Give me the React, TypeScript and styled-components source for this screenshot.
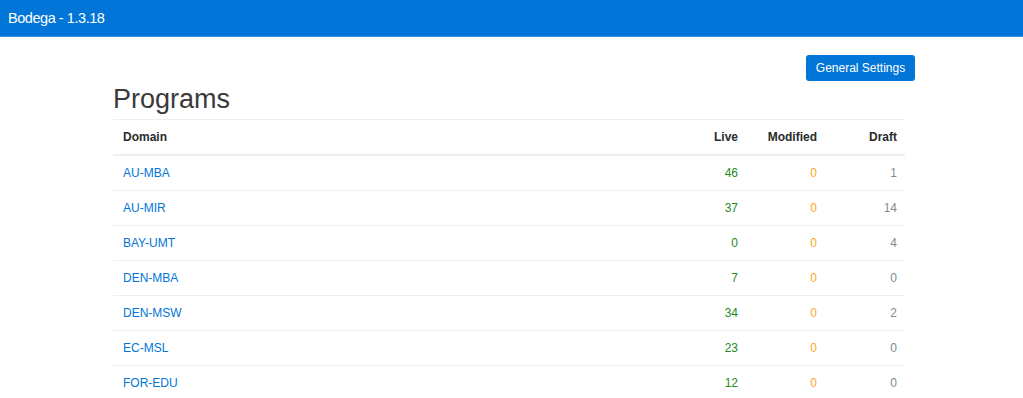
import styled, { createGlobalStyle } from "styled-components";

interface Program {
  domain: string;
  live: number;
  modified: number;
  draft: number;
}

const programs: Program[] = [
  { domain: "AU-MBA", live: 46, modified: 0, draft: 1 },
  { domain: "AU-MIR", live: 37, modified: 0, draft: 14 },
  { domain: "BAY-UMT", live: 0, modified: 0, draft: 4 },
  { domain: "DEN-MBA", live: 7, modified: 0, draft: 0 },
  { domain: "DEN-MSW", live: 34, modified: 0, draft: 2 },
  { domain: "EC-MSL", live: 23, modified: 0, draft: 0 },
  { domain: "FOR-EDU", live: 12, modified: 0, draft: 0 },
];

const App: React.FC = () => {
  return (
    <>
      <GlobalStyle />
      <NavBar>
        <Brand>Bodega - 1.3.18</Brand>
      </NavBar>
      <Container>
        <Actions>
          <PrimaryButton type="button">General Settings</PrimaryButton>
        </Actions>
        <Title>Programs</Title>
        <Table>
          <colgroup>
            <col />
            <col style={{ width: 79 }} />
            <col style={{ width: 79 }} />
            <col style={{ width: 78 }} />
          </colgroup>
          <thead>
            <tr>
              <Th>Domain</Th>
              <Th $right>Live</Th>
              <Th $right>Modified</Th>
              <Th $right>Draft</Th>
            </tr>
          </thead>
          <tbody>
            {programs.map((p) => (
              <tr key={p.domain}>
                <Td>
                  <DomainLink href="#">{p.domain}</DomainLink>
                </Td>
                <Td $right $tone="live">{p.live}</Td>
                <Td $right $tone="modified">{p.modified}</Td>
                <Td $right $tone="draft">{p.draft}</Td>
              </tr>
            ))}
          </tbody>
        </Table>
      </Container>
    </>
  );
};

const GlobalStyle = createGlobalStyle`
  body {
    margin: 0;
    background: #fff;
    font-family: "Liberation Sans", Arial, sans-serif;
    color: #373a3c;
  }
`;

const NavBar = styled.header`
  height: 36px;
  background: #0275d8;
  border-bottom: 1px solid #3b92e0;
  display: flex;
  align-items: center;
  padding: 0 8px;
`;

const Brand = styled.span`
  color: #fff;
  font-size: 14.5px;
  letter-spacing: -0.45px;
`;

const Container = styled.main`
  width: 812px;
  margin: 0 auto;
  padding-right: 5px;
`;

const Actions = styled.div`
  display: flex;
  justify-content: flex-end;
  margin-top: 18px;
`;

const PrimaryButton = styled.button`
  height: 26px;
  width: 109px;
  padding: 0;
  border: none;
  border-radius: 3px;
  background: #0275d8;
  color: #fff;
  font-family: inherit;
  font-size: 12px;
  cursor: pointer;
`;

const Title = styled.h1`
  margin: 2px 0 4px 10px;
  font-size: 27px;
  font-weight: 400;
  line-height: 32px;
  color: #3a3a3a;
`;

const Table = styled.table`
  width: 792px;
  margin-left: 10px;
  border-collapse: collapse;
  table-layout: fixed;
  font-size: 12px;
`;

const Th = styled.th<{ $right?: boolean }>`
  padding: 10px;
  line-height: 14px;
  text-align: ${(p) => (p.$right ? "right" : "left")};
  font-weight: 700;
  color: #292b2c;
  border-top: 1px solid #eceeef;
  border-bottom: 2px solid #eceeef;

  &:last-child {
    padding-right: 8px;
  }
`;

const toneColors = {
  live: "#1f8a1f",
  modified: "#ffa51f",
  draft: "#818a91",
};

const Td = styled.td<{ $right?: boolean; $tone?: keyof typeof toneColors }>`
  padding: 10px;
  line-height: 14px;
  text-align: ${(p) => (p.$right ? "right" : "left")};
  color: ${(p) => (p.$tone ? toneColors[p.$tone] : "#373a3c")};
  border-top: 1px solid #eceeef;

  &:last-child {
    padding-right: 8px;
  }
`;

const DomainLink = styled.a`
  color: #0275d8;
  text-decoration: none;
`;

export default App;
